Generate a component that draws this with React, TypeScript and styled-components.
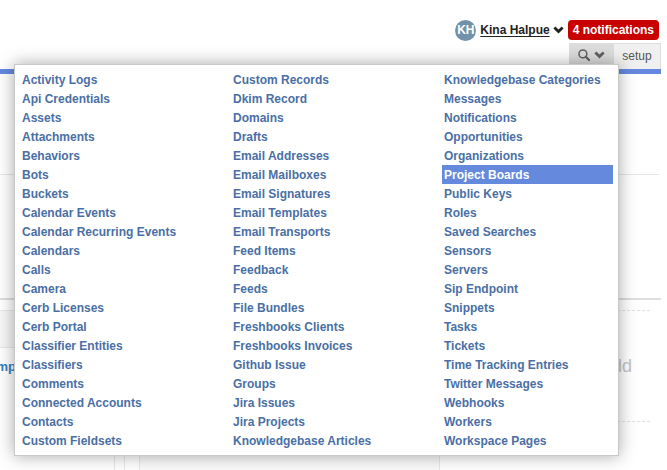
import React from "react";
import styled, { createGlobalStyle } from "styled-components";

const GlobalStyle = createGlobalStyle`
  * { box-sizing: border-box; }
  body {
    margin: 0;
    background: #fff;
    color: #222;
    font-family: "Liberation Sans", Arial, Helvetica, sans-serif;
    font-size: 12px;
    overflow: hidden;
  }
`;

const Page = styled.div`
  position: relative;
  display: flex;
  flex-direction: column;
  height: 100vh;
  padding-right: 6px;
  overflow: hidden;
`;

const AccountBar = styled.header`
  display: flex;
  justify-content: flex-end;
  align-items: center;
  height: 43px;
  padding: 17px 2px 0 0;
`;

const Avatar = styled.span`
  display: flex;
  align-items: center;
  justify-content: center;
  width: 21px;
  height: 21px;
  margin-right: 4px;
  border-radius: 50%;
  background: #7292aa;
  color: #fff;
  font-size: 12px;
  font-weight: bold;
`;

const AccountButton = styled.button`
  display: flex;
  align-items: center;
  gap: 3px;
  margin-right: 4px;
  padding: 0;
  border: 0;
  background: none;
  color: #222;
  font: bold 12px "Liberation Sans", sans-serif;
`;

const UserName = styled.span`
  text-decoration: underline;
  text-underline-offset: 2px;
`;

const NotificationButton = styled.button`
  height: 20px;
  padding: 0 5px;
  border: 0;
  border-radius: 4px;
  background: #c80000;
  color: #fff;
  font: bold 12px "Liberation Sans", sans-serif;
`;

const Nav = styled.nav`
  display: flex;
  justify-content: flex-end;
  height: 31px;
  border-bottom: 5px solid #6589df;
`;

const SearchTab = styled.button`
  display: flex;
  align-items: center;
  justify-content: center;
  gap: 4px;
  width: 45px;
  padding: 0 0 2px;
  border: 0;
  background: #dcdcdc;
  color: #606060;
`;

const SetupTab = styled.a`
  display: flex;
  align-items: center;
  justify-content: center;
  width: 47px;
  padding-bottom: 2px;
  border: solid #dedede;
  border-width: 1px 1px 0 0;
  background: #f0f0f0;
  color: #555;
  text-decoration: none;
`;

const Intro = styled.section`
  flex: none;
  height: 101px;
  margin-right: 2px;
  border-bottom: 1px solid #e6e6e6;
`;

const Details = styled.section`
  flex: none;
  height: 125px;
  border-bottom: 2px solid #dedede;
  margin-bottom: 10px;
`;

const Board = styled.main`
  display: grid;
  grid-template-columns: 115px 316px 1fr;
  column-gap: 9px;
  flex: 1;
  padding-right: 11px;
`;

const Widget = styled.article`
  border: solid #e8e8e8;
  border-width: 1px 1px 0 0;
`;

const WidgetTitle = styled.div`
  height: 37px;
  border-bottom: 1px solid #e8e8e8;
  background: #f7f7f7;
`;

const WidgetLink = styled.a`
  display: flex;
  justify-content: flex-end;
  width: 16px;
  padding-top: 9px;
  color: #347ec5;
  font-size: 13px;
  font-weight: bold;
  line-height: 20px;
  text-decoration: none;
`;

const Lane = styled.section`
  padding-left: 14px;
  border-left: 1px solid #e8e8e8;
`;

const Card = styled.article`
  height: 100%;
  border: 1px solid #e8e8e8;
  border-bottom: 0;
  background: #fafafa;
`;

const AddArea = styled.section`
  display: flex;
  justify-content: flex-end;
  align-items: center;
  height: 112px;
  padding-right: 18px;
  border: dashed #e0e0e0;
  border-width: 1px 0;
  color: #c4c4c4;
  font-size: 18px;
`;

const Popup = styled.div`
  position: absolute;
  top: 64px;
  left: 14px;
  right: 48px;
  display: grid;
  grid-template-columns: repeat(3, 1fr);
  column-gap: 40px;
  padding: 5px 5px 5px;
  border: 1px solid #c8c8c8;
  background: #fff;
  box-shadow: 0 0 16px rgba(0, 0, 0, 0.35);
`;

const List = styled.ul`
  margin: 0;
  padding: 0;
  list-style: none;
`;

const Item = styled.a<{ $active?: boolean }>`
  display: block;
  height: 19px;
  padding: 0 2px;
  background: ${(p) => (p.$active ? "#6589dc" : "transparent")};
  color: ${(p) => (p.$active ? "#fff" : "#4a6fa5")};
  font-weight: bold;
  line-height: 21px;
  white-space: nowrap;
  text-decoration: none;
`;

const columns = [
  ["Activity Logs", "Api Credentials", "Assets", "Attachments", "Behaviors", "Bots", "Buckets", "Calendar Events", "Calendar Recurring Events", "Calendars", "Calls", "Camera", "Cerb Licenses", "Cerb Portal", "Classifier Entities", "Classifiers", "Comments", "Connected Accounts", "Contacts", "Custom Fieldsets"],
  ["Custom Records", "Dkim Record", "Domains", "Drafts", "Email Addresses", "Email Mailboxes", "Email Signatures", "Email Templates", "Email Transports", "Feed Items", "Feedback", "Feeds", "File Bundles", "Freshbooks Clients", "Freshbooks Invoices", "Github Issue", "Groups", "Jira Issues", "Jira Projects", "Knowledgebase Articles"],
  ["Knowledgebase Categories", "Messages", "Notifications", "Opportunities", "Organizations", "Project Boards", "Public Keys", "Roles", "Saved Searches", "Sensors", "Servers", "Sip Endpoint", "Snippets", "Tasks", "Tickets", "Time Tracking Entries", "Twitter Messages", "Webhooks", "Workers", "Workspace Pages"],
];

const Chevron = () => (
  <svg width="11" height="8" viewBox="0 0 11 8" aria-hidden="true">
    <path d="M2.3 0.6 5.5 3.6 8.7 0.6 10.6 2.5 5.5 7.5 0.4 2.5Z" fill="currentColor" />
  </svg>
);

const SearchIcon = () => (
  <svg width="12" height="12" viewBox="0 0 12 12" fill="none" stroke="currentColor" aria-hidden="true">
    <circle cx="4.9" cy="4.9" r="3.9" strokeWidth="1.5" />
    <path d="M7.8 7.8 11 11" strokeWidth="2.1" strokeLinecap="round" />
  </svg>
);

export default function App() {
  return (
    <>
      <GlobalStyle />
      <Page>
        <AccountBar>
          <Avatar>KH</Avatar>
          <AccountButton>
            <UserName>Kina Halpue</UserName>
            <Chevron />
          </AccountButton>
          <NotificationButton>4 notifications</NotificationButton>
        </AccountBar>
        <Nav>
          <SearchTab aria-label="Search">
            <SearchIcon />
            <Chevron />
          </SearchTab>
          <SetupTab href="#setup">setup</SetupTab>
        </Nav>
        <Intro />
        <Details />
        <Board>
          <Widget>
            <WidgetTitle />
            <WidgetLink href="#widget">mp</WidgetLink>
          </Widget>
          <Lane>
            <Card />
          </Lane>
          <AddArea>Add</AddArea>
        </Board>
        <Popup>
          {columns.map((names) => (
            <List key={names[0]}>
              {names.map((name) => (
                <li key={name}>
                  <Item href="#records" $active={name === "Project Boards"}>{name}</Item>
                </li>
              ))}
            </List>
          ))}
        </Popup>
      </Page>
    </>
  );
}
